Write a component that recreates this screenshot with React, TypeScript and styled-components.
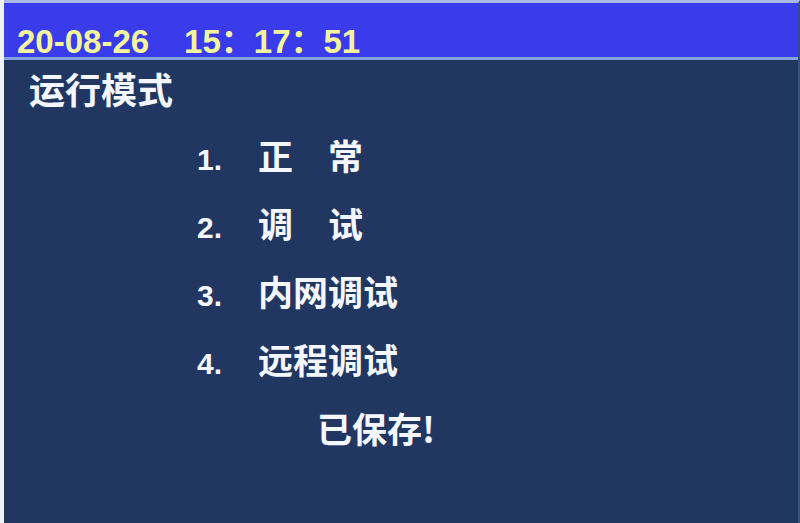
import * as React from "react";
import styled, { createGlobalStyle } from "styled-components";

const GlobalStyle = createGlobalStyle`
  html, body {
    margin: 0;
    padding: 0;
    background: #ffffff;
  }
`;

const Page = styled.div`
  display: flex;
  width: 800px;
  height: 523px;
  box-sizing: border-box;
  padding-left: 4px;
  background: #eef2fb;
  overflow: hidden;
`;

const Screen = styled.div`
  display: flex;
  flex-direction: column;
  flex: 1;
  background: #213761;
  border-top: 3px solid #a7b9e6;
  border-right: 2px solid #34507c;
`;

const Header = styled.div`
  display: flex;
  align-items: center;
  height: 57px;
  box-sizing: border-box;
  padding: 22px 0 0 13px;
  background: #3a3cec;
  border-bottom: 3px solid #86a2de;
  color: #f3f59c;
  font-family: "Liberation Sans", "Noto Sans CJK SC", sans-serif;
  font-weight: 700;
  font-size: 33px;
  line-height: 1;
  white-space: pre;
`;

const Clock = styled.span<{ $gap?: number }>`
  margin-left: ${(p) => p.$gap ?? 0}px;
`;

const Title = styled.div`
  padding: 8px 0 0 25px;
  color: #f4f7ff;
  font-family: "Noto Sans CJK SC", sans-serif;
  font-weight: 700;
  font-size: 36px;
  line-height: 40px;
`;

const Menu = styled.ol`
  list-style: none;
  margin: 13px 0 0;
  padding: 0 0 0 193px;
  display: flex;
  flex-direction: column;
`;

const Item = styled.li`
  display: flex;
  align-items: baseline;
  height: 68px;
  color: #f4f7ff;
`;

const Num = styled.span`
  width: 61px;
  font-family: "Liberation Sans", sans-serif;
  font-weight: 700;
  font-size: 30px;
`;

const Label = styled.span`
  font-family: "Noto Sans CJK SC", sans-serif;
  font-weight: 700;
  font-size: 35px;
  line-height: 68px;
  white-space: pre;
`;

const Saved = styled.div`
  padding-left: 313px;
  height: 68px;
  display: flex;
  align-items: center;
  color: #f4f7ff;
  font-family: "Noto Sans CJK SC", sans-serif;
  font-weight: 700;
  font-size: 35px;
`;

const items = ["正　常", "调　试", "内网调试", "远程调试"];

export default function App() {
  return (
    <>
      <GlobalStyle />
      <Page>
        <Screen>
          <Header>
            <Clock>20-08-26</Clock>
            <Clock $gap={35}>15：17：51</Clock>
          </Header>
          <Title>运行模式</Title>
          <Menu>
            {items.map((label, i) => (
              <Item key={label}>
                <Num>{i + 1}.</Num>
                <Label>{label}</Label>
              </Item>
            ))}
          </Menu>
          <Saved>已保存!</Saved>
        </Screen>
      </Page>
    </>
  );
}
